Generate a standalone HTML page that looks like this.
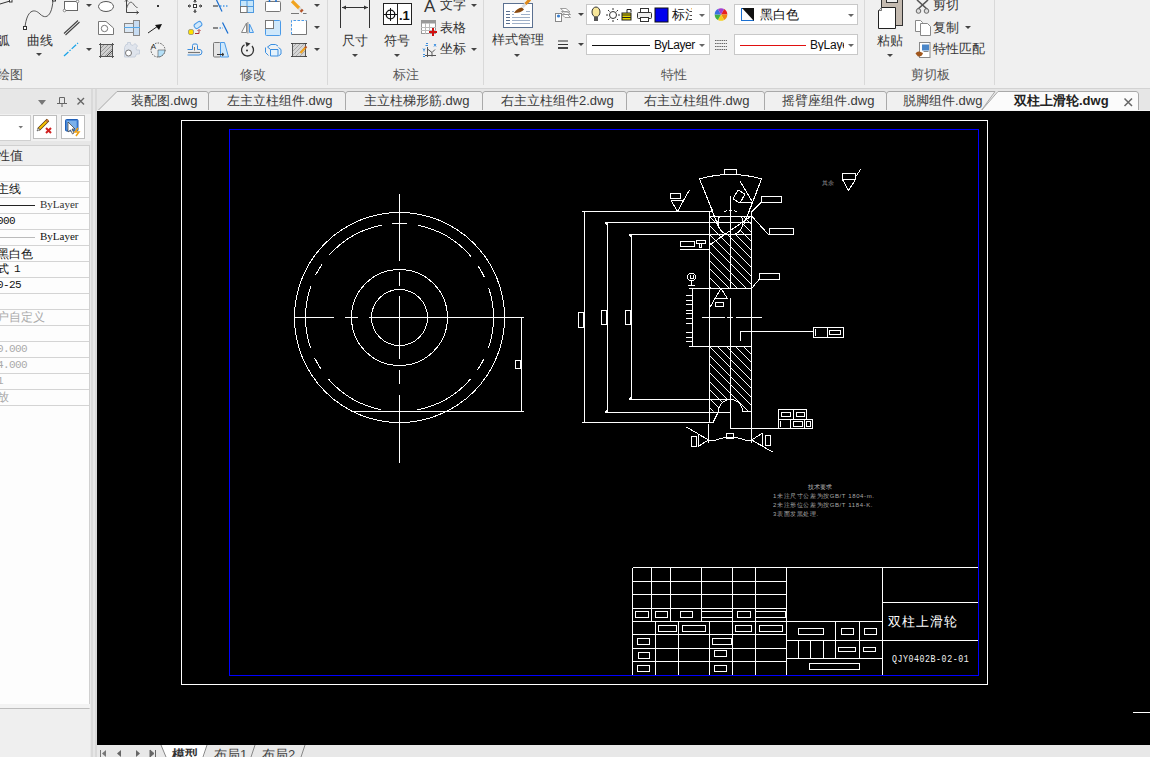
<!DOCTYPE html><html><head><meta charset="utf-8"><style>
*{margin:0;padding:0;box-sizing:border-box}
html,body{width:1150px;height:757px;overflow:hidden;background:#f0f0f0;font-family:"Liberation Sans",sans-serif;color:#333}
.a{position:absolute}
.t{position:absolute;white-space:nowrap;font-size:13px;line-height:14px;color:#444}
.sep{position:absolute;top:0;width:1px;height:85px;background:#d9d9d9}
.dd{position:absolute;width:0;height:0;border-left:3px solid transparent;border-right:3px solid transparent;border-top:3px solid #444}
.pr{position:absolute;left:0;width:89px;height:16px;border-bottom:1px solid #d7d7d7}
.pt{position:absolute;left:0;white-space:nowrap;font-size:12px;line-height:12px;color:#111}
.pg{color:#9a9a9a}
.sh{left:-3px}
.ser{font-family:"Liberation Serif",serif}
.mono{font-family:"Liberation Mono",monospace}
</style></head><body>
<div class="a" style="left:0;top:0;width:1150px;height:88px;background:#f0f0f0"></div>
<div class="a" style="left:0;top:88px;width:1150px;height:1px;background:#d3d3d3"></div>
<div class="sep" style="left:177px"></div>
<div class="sep" style="left:327px"></div>
<div class="sep" style="left:483px"></div>
<div class="sep" style="left:864px"></div>
<div class="sep" style="left:994px"></div>
<div class="t" style="left:-3px;top:68px;font-size:13px;line-height:13px;color:#555;">绘图</div>
<div class="t" style="left:240px;top:68px;font-size:13px;line-height:13px;color:#555;">修改</div>
<div class="t" style="left:393px;top:68px;font-size:13px;line-height:13px;color:#555;">标注</div>
<div class="t" style="left:661px;top:68px;font-size:13px;line-height:13px;color:#555;">特性</div>
<div class="t" style="left:911px;top:68px;font-size:13px;line-height:13px;color:#555;">剪切板</div>
<div class="t" style="left:-3px;top:34px;font-size:13px;line-height:13px;color:#333;">弧</div>
<div class="t" style="left:27px;top:34px;font-size:13px;line-height:13px;color:#333;">曲线</div>
<div class="dd" style="left:36px;top:53px;border-top-color:#444"></div>
<div class="t" style="left:342px;top:34px;font-size:13px;line-height:13px;color:#333;">尺寸</div>
<div class="dd" style="left:352px;top:54px;border-top-color:#444"></div>
<div class="t" style="left:384px;top:34px;font-size:13px;line-height:13px;color:#333;">符号</div>
<div class="dd" style="left:394px;top:54px;border-top-color:#444"></div>
<div class="t" style="left:492px;top:33px;font-size:13px;line-height:13px;color:#333;">样式管理</div>
<div class="dd" style="left:514px;top:54px;border-top-color:#444"></div>
<div class="t" style="left:877px;top:34px;font-size:13px;line-height:13px;color:#333;">粘贴</div>
<div class="dd" style="left:887px;top:54px;border-top-color:#444"></div>
<div class="t" style="left:440px;top:-2px;font-size:13px;line-height:13px;color:#333;">文字</div>
<div class="dd" style="left:471px;top:4px;border-top-color:#444"></div>
<div class="t" style="left:440px;top:21px;font-size:13px;line-height:13px;color:#333;">表格</div>
<div class="t" style="left:440px;top:42px;font-size:13px;line-height:13px;color:#333;">坐标</div>
<div class="dd" style="left:471px;top:48px;border-top-color:#444"></div>
<div class="t" style="left:933px;top:-2px;font-size:13px;line-height:13px;color:#333;">剪切</div>
<div class="t" style="left:933px;top:21px;font-size:13px;line-height:13px;color:#333;">复制</div>
<div class="dd" style="left:965px;top:26px;border-top-color:#444"></div>
<div class="t" style="left:933px;top:42px;font-size:13px;line-height:13px;color:#333;">特性匹配</div>
<div class="dd" style="left:86px;top:4px;border-top-color:#444"></div>
<div class="dd" style="left:86px;top:48px;border-top-color:#444"></div>
<div class="dd" style="left:314px;top:4px;border-top-color:#444"></div>
<div class="dd" style="left:314px;top:26px;border-top-color:#444"></div>
<div class="dd" style="left:314px;top:48px;border-top-color:#444"></div>
<div class="dd" style="left:578px;top:13px;border-top-color:#444"></div>
<div class="dd" style="left:578px;top:43px;border-top-color:#444"></div>
<svg class="a" style="left:0;top:0" width="1150" height="88" viewBox="0 0 1150 88"><path d="M0 4 L10 1" stroke="#333" fill="none"/><rect x="9.5" y="-0.5" width="2.5" height="2.5" fill="#fff" stroke="#333"/><path d="M25 27 C27 10 34 8 40 14 C46 20 52 16 53 0" stroke="#555" fill="none"/><rect x="23.5" y="26.5" width="3" height="3" fill="#fff" stroke="#333"/><rect x="52.5" y="-1" width="3" height="2" fill="#fff" stroke="#333"/><rect x="64.5" y="1.5" width="13" height="9" fill="#fff" stroke="#666"/><circle cx="64.5" cy="10.5" r="1.3" fill="#fff" stroke="#666" stroke-width=".7"/><circle cx="77.5" cy="1.5" r="1.3" fill="#fff" stroke="#666" stroke-width=".7"/><path d="M64 33.5 L78 20.5 M65.5 35 L79.5 22" stroke="#444" stroke-width="1.1" fill="none"/><path d="M64 56 L78 43" stroke="#1aa3e8" stroke-width="1.3" stroke-dasharray="6 1.5 1.5 1.5" fill="none"/><ellipse cx="106" cy="6.5" rx="7.5" ry="5" fill="#fff" stroke="#555"/><path d="M126.5 0 V12.5 H138.5" stroke="#444" fill="none"/><path d="M136.5 11 L138.5 12.5 L136.5 14 M125 1.5 L126.5 0 L128 1.5" stroke="#444" fill="none"/><path d="M126.5 8.5 C128.5 2 131 1 133 3.5 C135 6 136 7.5 137.5 7.5" stroke="#555" fill="none"/><rect x="157" y="5" width="2" height="2" fill="#333"/><path d="M98.5 21.5 H106 L113.5 28 V34.5 H98.5 Z" fill="#fff" stroke="#777"/><circle cx="104.5" cy="28.5" r="3.2" fill="none" stroke="#777"/><rect x="124.5" y="23.5" width="9" height="9" fill="#dbe7f3" stroke="#888"/><rect x="133.5" y="20.5" width="6" height="15" fill="#c7dcf2" stroke="#888"/><path d="M124 27.5 H140" stroke="#57a8e8"/><path d="M148 33 L158 26" stroke="#222"/><path d="M162 24 L155 25 L159 30 Z" fill="#111"/><rect x="100.5" y="44.5" width="12" height="12" fill="#d0d0d0" stroke="#666"/><path d="M101 48 L104 45 M101 52 L108 45 M101 56 L112 45 M105 56 L112 49 M109 56 L112 53" stroke="#999"/><path d="M99 44.5 H114 M100.5 43 V58 M99 56.5 H114 M112.5 43 V58" stroke="#555"/><path d="M106 57 L113 50" stroke="#444"/><path d="M124.5 47.5 L126 44.5 H127.5 V42.5 H130.5 V44.5 L133 45.5 L135 43.5 L137.5 46 L136 48 L136.5 50 H139.5 V54 H136.5 L135 57 H124.5 Z" fill="#dfe4ec" stroke="#c8d0dc"/><circle cx="128.5" cy="53" r="3" fill="#fff" stroke="#777"/><circle cx="158" cy="50" r="7" fill="none" stroke="#555" stroke-dasharray="1.5 1.2"/><path d="M158 50 H165 A7 7 0 0 1 158 57 Z" fill="#b5e0f8" stroke="#555" stroke-width=".6"/><text x="151" y="48.5" font-size="7.5" fill="#333" font-family="Liberation Sans">A</text><rect x="193.5" y="4.5" width="3" height="3" fill="#fff" stroke="#333"/><path d="M195 0 V2.5 M195 9.5 V12.5 M188 6 H191 M199 6 H202" stroke="#444" stroke-width="1.6"/><path d="M193.5 1.5 L195 0 L196.5 1.5 M193.5 11 L195 12.5 L196.5 11 M189.5 4.5 L188 6 L189.5 7.5 M200.5 4.5 L202 6 L200.5 7.5" stroke="#444" fill="none"/><path d="M213 6 H218" stroke="#666" stroke-width="1.5"/><path d="M220 6 H228.5" stroke="#4a9ae8" stroke-width="1.3" stroke-dasharray="1.5 1.5"/><path d="M216.5 0 L222 11.5" stroke="#1a6fd1" stroke-width="1.2"/><rect x="240.5" y="0.5" width="13" height="12" fill="#c6e6fb" stroke="#4f9ae0"/><path d="M247 0 V13 M240 6.5 H254" stroke="#4f9ae0"/><rect x="240.5" y="6.5" width="6.5" height="6" fill="#fff" stroke="#777"/><rect x="265.5" y="1.5" width="15" height="10" rx="1" fill="#fff" stroke="#777"/><path d="M269.5 0 V2 M276 0 V2" stroke="#1a6fd1" stroke-width="1.5"/><path d="M292 1 L299.5 8.5" stroke="#f0a31f" stroke-width="3.2"/><path d="M299 8 L301 10" stroke="#ddd" stroke-width="3.2"/><path d="M300.8 9.8 L302.5 11.5" stroke="#b5542a" stroke-width="3.2"/><path d="M291 13.5 H299 M303 13.5 H306.5" stroke="#777"/><rect x="188.5" y="29.5" width="5" height="5" rx="1.5" fill="#ffe100" stroke="#777" stroke-width=".6"/><rect x="194" y="22.5" width="8" height="5" rx="2.2" transform="rotate(-35 198 25)" fill="#cfe8fb" stroke="#4a9ae8"/><path d="M195 33.5 H199 V30.5" stroke="#b03030" fill="none"/><path d="M197.5 31 L199 29.5 L200.5 31" stroke="#b03030" fill="none"/><path d="M213 28 H218" stroke="#666" stroke-width="1.5"/><path d="M219.5 28 H223" stroke="#4a9ae8" stroke-width="1.3" stroke-dasharray="1.5 1.5"/><path d="M222.5 22.5 L228 33.5" stroke="#1a6fd1" stroke-width="1.2"/><path d="M246.5 23 L241.5 32.5 H246.5 Z" fill="#fff" stroke="#888"/><path d="M247.8 22 V33.5" stroke="#aaa" stroke-width="1.5"/><path d="M249.5 24 L253.5 32.5 H249.5 Z" fill="#cfe8fb" stroke="#4a9ae8"/><rect x="265.5" y="20.5" width="15" height="15" rx="1" fill="#cfe8fb" stroke="#4a9ae8"/><rect x="265.5" y="20.5" width="8" height="8" fill="#fff" stroke="#777"/><path d="M291.5 34.5 H306.5 V20.5" stroke="#777" fill="none"/><path d="M291.5 34.5 V20.5 H306.5" stroke="#4a9ae8" fill="none" stroke-dasharray="2.5 1.5"/><rect x="292" y="21" width="14" height="13" fill="#fff"/><path d="M187.5 49.5 H192.5 V45.5 Q192.5 44 194 44 H196 Q197.5 44 197.5 45.5 V49.5 H200 Q202 50 202 52 Q202 55 199 55 H187.5" stroke="#3a8ee0" fill="none"/><path d="M188 52.5 H200" stroke="#777" stroke-width="1.2"/><path d="M194.5 47 V50.5" stroke="#777"/><rect x="213.5" y="42.5" width="7" height="14.5" rx="1" fill="#e4e4e4" stroke="#777"/><path d="M220.5 42.5 H224.5 L228.5 57 H220.5 Z" fill="#cfe8fb" stroke="#4a9ae8"/><path d="M217 54.5 H223.5 M222 53 L224 54.5 L222 56" stroke="#333" fill="none"/><path d="M252 46 A6 6 0 1 1 244.5 44.8" fill="none" stroke="#333" stroke-width="1.3"/><path d="M245.5 42 L250.5 43.5 L246.5 47 Z" fill="#333"/><circle cx="247" cy="50.5" r="1" fill="#333"/><path d="M267.5 47 L271 44.5 H275.5 L278 46 M265.5 47.5 V52.5 L268.5 55.5 M270.5 49.5 H278 V56 H270.5 Z M278.5 47.5 L281 49.5 V54 L278.5 56 M267.5 47 L270.5 49.5" stroke="#3a8ee0" fill="#e4f2fc"/><rect x="292.5" y="43.5" width="13" height="13" fill="#d6d6d6" stroke="#555"/><path d="M293 47 L296 44 M293 51 L300 44 M293 55 L304 44 M296 56 L305 47 M300 56 L305 51" stroke="#aaa"/><path d="M291 43.5 H293 M304 43.5 H307 M291 56.5 H293 M304 56.5 H307" stroke="#444"/><path d="M300.5 53 L305.5 47.5" stroke="#f0a31f" stroke-width="2.2"/><path d="M305 48 L306.5 46.5" stroke="#b5542a" stroke-width="2.2"/><path d="M340.5 0 V28 M369.5 0 V28 M342 7.5 H368" stroke="#333" fill="none"/><path d="M342 7.5 L346 5.5 V9.5 Z M368 7.5 L364 5.5 V9.5 Z" fill="#333"/><rect x="383.5" y="3.5" width="28" height="21" fill="#fff" stroke="#222"/><path d="M397.5 3.5 V24.5" stroke="#222"/><circle cx="390.5" cy="14.5" r="4.3" fill="none" stroke="#111" stroke-width="1.3"/><path d="M384 14.5 H397 M390.5 8 V21" stroke="#111"/><text x="399" y="20" font-size="13" font-weight="bold" fill="#111" font-family="Liberation Sans">.1</text><text x="424" y="12" font-size="17" fill="#333" font-family="Liberation Sans">A</text><rect x="421.5" y="20.5" width="14" height="13" fill="#fff" stroke="#999"/><rect x="421.5" y="20.5" width="14" height="3" fill="#999"/><path d="M421 27.5 H436 M421 30.5 H436 M425.5 23 V34 M429.5 23 V34" stroke="#bbb"/><path d="M433 28 V36 M429 32 H437" stroke="#d01010" stroke-width="2"/><path d="M427.5 47 V57 M425 55.5 H436 M427.5 49 L432 52.5 L435 49.5 M432 52.5 V56.5" stroke="#555" fill="none"/><path d="M426 43.5 H428 M425.5 45.5 H428 M434 44 L436 46.5 M436 44 L434 46.5 M423 48.5 L424 50 L425 48.5 M424 50 V51.5 M423 54.5 H425 M423 56.5 H425" stroke="#3a8ee0" fill="none"/><rect x="503.5" y="3.5" width="29" height="24" fill="#fff" stroke="#5a7090"/><path d="M506 11.5 H510 M506 14.5 H510 M506 17.5 H510 M506 20.5 H510 M506 23.5 H510" stroke="#5a7090"/><path d="M512 17.5 H530 M512 20.5 H530 M512 23.5 H530 M521 14.5 H530 M526 11.5 H530 M512 11.5 H514 M512 14.5 H514" stroke="#9fb0c8"/><path d="M514 13 Q517 8 522 7.5 L524 9.5 Q521 13 514 13 Z" fill="#8a4a10"/><path d="M522.5 7 L526 3.5" stroke="#ddd" stroke-width="3"/><path d="M525.5 4 L530 -0.5" stroke="#e08a1a" stroke-width="3"/><path d="M560.5 8.5 L566 8.5 L570 12 L564.5 12 Z M561.5 11.5 L567 11.5 L570.5 14.5 L565 14.5 Z M562 14.5 L567.5 14.5 L570.5 17.5 L565 17.5 Z" fill="#fff" stroke="#888" stroke-width=".8"/><rect x="555.5" y="13.5" width="6" height="8" fill="#fff" stroke="#888"/><circle cx="558.5" cy="16" r="1.6" fill="#3a80d0"/><path d="M558 41 H568 M558 44.5 H568" stroke="#333" stroke-width="1.2"/><path d="M558 48 H568" stroke="#333" stroke-width="1.8"/><rect x="586.5" y="4.5" width="123" height="20" fill="#fff" stroke="#c8c8c8"/><rect x="586.5" y="34.5" width="123" height="20" fill="#fff" stroke="#c8c8c8"/><rect x="734.5" y="4.5" width="123" height="20" fill="#fff" stroke="#c8c8c8"/><rect x="734.5" y="34.5" width="123" height="20" fill="#fff" stroke="#c8c8c8"/><ellipse cx="596" cy="12" rx="4" ry="5" fill="#f8e79a" stroke="#333"/><rect x="594" y="17" width="4" height="4" fill="#555"/><circle cx="613" cy="15" r="3.5" fill="none" stroke="#333"/><path d="M606 15 H608 M618 15 H620 M613 8 V10 M613 20 V22 M608 10 L609.5 11.5 M617 19 L618 20 M618 10 L616.5 11.5 M608 20 L609.5 18.5" stroke="#333"/><rect x="622" y="13" width="9" height="7" fill="#e8d800" stroke="#222"/><path d="M622 15 H631 M622 17.5 H631" stroke="#222"/><path d="M627 13 V9.5 H631 V12" stroke="#222" fill="none"/><rect x="637.5" y="12.5" width="14" height="6" rx="1" fill="#eee" stroke="#333"/><rect x="640.5" y="8.5" width="8" height="4" fill="#fff" stroke="#333"/><rect x="640.5" y="17.5" width="8" height="4" fill="#fff" stroke="#333"/><rect x="655" y="8" width="13" height="14" fill="#0000ee" stroke="#111"/><path d="M721 14.5 L724.15 9.04 A6.3 6.3 0 0 1 727.30 14.50 Z" fill="#e82020"/><path d="M721 14.5 L727.30 14.50 A6.3 6.3 0 0 1 724.15 19.96 Z" fill="#f08a10"/><path d="M721 14.5 L724.15 19.96 A6.3 6.3 0 0 1 717.85 19.96 Z" fill="#f4d020"/><path d="M721 14.5 L717.85 19.96 A6.3 6.3 0 0 1 714.70 14.50 Z" fill="#40b040"/><path d="M721 14.5 L714.70 14.50 A6.3 6.3 0 0 1 717.85 9.04 Z" fill="#3a70e0"/><path d="M721 14.5 L717.85 9.04 A6.3 6.3 0 0 1 724.15 9.04 Z" fill="#a040d0"/><path d="M715 40.5 H727 M715 43.5 H727 M715 46.5 H727 M715 49.5 H727" stroke="#666" stroke-dasharray="1.5 .7"/><rect x="741.5" y="8.5" width="12" height="12" fill="#fff" stroke="#1a6fd1"/><path d="M742 8 H754 V21 Z" fill="#111"/><path d="M592 45.5 H650" stroke="#111"/><path d="M740 45.5 H806" stroke="#e01010"/><rect x="881.5" y="-1.5" width="21" height="27" fill="#c4bab0" stroke="#333"/><rect x="886.5" y="-1" width="11" height="3.5" fill="#eee" stroke="#333"/><path d="M881.5 7.5 H895.5 V28.5 H878.5 V10.5 Z" fill="#fff" stroke="#222"/><path d="M878.5 10.5 H881.5 V7.5" fill="#ddd" stroke="#222" stroke-width=".6"/><path d="M917 0 L927.5 9.5 M928 0 L917.5 9.5" stroke="#555" stroke-width="1.6"/><circle cx="918.5" cy="11" r="2.3" fill="#ddd" stroke="#666"/><circle cx="926.5" cy="11" r="2.3" fill="#ddd" stroke="#666"/><path d="M915.5 20.5 H920.5 L922.5 22.5 V31.5 H915.5 Z" fill="#fff" stroke="#888"/><path d="M920.5 23.5 H927.5 L930.5 26.5 V35.5 H920.5 Z" fill="#fff" stroke="#888"/><rect x="919.5" y="42.5" width="10.5" height="15" fill="#fff" stroke="#888"/><rect x="922" y="44.5" width="7" height="6" fill="#4a86c8"/><path d="M923.5 51.5 H928.5" stroke="#888"/><path d="M915.5 53.5 Q917 51 919.5 51.5 L923 53 Q922 57 918 56.5 Z" fill="#a0561c"/></svg>
<div class="t" style="left:672px;top:8px;font-size:13px;color:#111">标注</div>
<div class="a" style="left:692px;top:5px;width:6px;height:19px;background:#fff"></div>
<div class="dd" style="left:699px;top:14px;border-top-color:#666"></div>
<div class="t" style="left:654px;top:39px;font-size:12px;line-height:12px;color:#111;letter-spacing:-0.45px">ByLayer</div>
<div class="dd" style="left:699px;top:44px;border-top-color:#666"></div>
<div class="t" style="left:760px;top:8px;font-size:13px;color:#111">黑白色</div>
<div class="dd" style="left:848px;top:14px;border-top-color:#666"></div>
<div class="t" style="left:810px;top:39px;font-size:12px;line-height:12px;color:#111;width:34px;overflow:hidden;letter-spacing:-0.2px">ByLayer</div>
<div class="dd" style="left:848px;top:44px;border-top-color:#666"></div>
<div class="a" style="left:0;top:89px;width:91px;height:668px;background:#e7e7e7"></div>
<div class="a" style="left:91px;top:89px;width:6px;height:668px;background:#d9d9d9"></div>
<div class="a" style="left:93px;top:89px;width:2px;height:668px;background:#e6e6e6"></div>
<div class="dd" style="left:38px;top:100px;border-left-width:4.5px;border-right-width:4.5px;border-top-width:5px;border-top-color:#777"></div>
<svg class="a" style="left:0;top:89px" width="91" height="60" viewBox="0 89 91 60"><path d="M59.5 97.5 H64.5 V103.5 H59.5 Z M57 103.5 H67 M62 103.5 V107" stroke="#666" fill="none"/><path d="M77.5 98 L84 104.5 M84 98 L77.5 104.5" stroke="#666" stroke-width="1.4"/><rect x="0" y="114" width="91" height="27" fill="#f1f1f1"/><rect x="-1" y="115.5" width="31.5" height="25" fill="#fff" stroke="#d0d0d0"/><path d="M18.5 126 H23 L20.75 128.5 Z" fill="#777"/><rect x="33.5" y="115.5" width="23" height="23" fill="#fff" stroke="#bdbdbd"/><rect x="61.5" y="115.5" width="23" height="23" fill="#fff" stroke="#bdbdbd"/><path d="M38.5 129.5 L48 120" stroke="#5a3a10" stroke-width="3.6"/><path d="M39 129 L46.5 121.5" stroke="#f8c400" stroke-width="2"/><path d="M46.3 121.7 L48.2 119.8" stroke="#c87a3a" stroke-width="2"/><path d="M37 131 L38.5 128 L40 129.5 Z" fill="#fff" stroke="#333" stroke-width=".6"/><path d="M46 128 L51 133 M51 128 L46 133" stroke="#d02020" stroke-width="2"/><rect x="65.5" y="119.5" width="12.5" height="11.5" rx="1" fill="#4a88d8" stroke="#1f5fb8"/><rect x="67" y="121" width="9.5" height="8.5" fill="#7ab0ea"/><path d="M68 122 L68 132 L70.5 130 L72.5 134 L74 133 L72 129 L75 129 Z" fill="#fff" stroke="#333" stroke-width=".7"/><path d="M78 128 L75 132 H79 L76 136" stroke="#f0a010" stroke-width="1.5" fill="none"/></svg>
<div class="a" style="left:0;top:145px;width:90px;height:560px;background:#fdfdfd"></div>
<div class="a" style="left:0;top:145px;width:90px;height:21px;background:#f0f0f0;border-top:1px solid #d0d0d0;border-bottom:1px solid #cfcfcf;border-right:1px solid #d0d0d0"></div>
<div class="t" style="left:-3px;top:149px;font-size:13px;line-height:14px;color:#333">性值</div>
<div class="a" style="left:0;top:181px;width:89px;height:1px;background:#d4d4d4"></div>
<div class="a" style="left:0;top:197px;width:89px;height:1px;background:#d4d4d4"></div>
<div class="a" style="left:0;top:213px;width:89px;height:1px;background:#d4d4d4"></div>
<div class="a" style="left:0;top:229px;width:89px;height:1px;background:#d4d4d4"></div>
<div class="a" style="left:0;top:245px;width:89px;height:1px;background:#d4d4d4"></div>
<div class="a" style="left:0;top:261px;width:89px;height:1px;background:#d4d4d4"></div>
<div class="a" style="left:0;top:277px;width:89px;height:1px;background:#d4d4d4"></div>
<div class="a" style="left:0;top:293px;width:89px;height:1px;background:#d4d4d4"></div>
<div class="a" style="left:0;top:309px;width:89px;height:1px;background:#d4d4d4"></div>
<div class="a" style="left:0;top:325px;width:89px;height:1px;background:#d4d4d4"></div>
<div class="a" style="left:0;top:341px;width:89px;height:1px;background:#d4d4d4"></div>
<div class="a" style="left:0;top:357px;width:89px;height:1px;background:#d4d4d4"></div>
<div class="a" style="left:0;top:373px;width:89px;height:1px;background:#d4d4d4"></div>
<div class="a" style="left:0;top:389px;width:89px;height:1px;background:#d4d4d4"></div>
<div class="a" style="left:0;top:405px;width:89px;height:1px;background:#d4d4d4"></div>
<div class="a" style="left:89px;top:145px;width:1px;height:565px;background:#d0d0d0"></div>
<div class="a" style="left:0;top:704px;width:90px;height:4px;background:#f3f3f3"></div>
<div class="a" style="left:0;top:708px;width:89px;height:1px;background:#bdbdbd"></div>
<div class="a" style="left:0;top:709px;width:90px;height:48px;background:#efefef"></div>
<div class="pt sh" style="top:183px;color:#111;font-size:12px;line-height:12px">主线</div>
<div class="a" style="left:0;top:205px;width:35px;height:1px;background:#222"></div>
<div class="t ser" style="left:40px;top:199px;font-size:11px;line-height:11px;color:#333">ByLayer</div>
<div class="t mono" style="left:-3px;top:216px;font-size:11px;line-height:11px;color:#111;letter-spacing:-0.6px">000</div>
<div class="a" style="left:0;top:237px;width:35px;height:1px;background:#bbb"></div>
<div class="t ser" style="left:40px;top:231px;font-size:11px;line-height:11px;color:#111">ByLayer</div>
<div class="pt sh" style="top:248px;color:#111;font-size:12px;line-height:12px">黑白色</div>
<div class="pt sh" style="top:263px;color:#111;font-size:12px;line-height:12px">式</div>
<div class="t mono" style="left:14px;top:264px;font-size:11px;line-height:11px;color:#111">1</div>
<div class="t mono" style="left:-3px;top:280px;font-size:11px;line-height:11px;color:#111;letter-spacing:-0.6px">0-25</div>
<div class="pt sh" style="top:311px;color:#aaa;font-size:12px;line-height:12px">户自定义</div>
<div class="t mono" style="left:-3px;top:344px;font-size:11px;line-height:11px;color:#aaa;letter-spacing:-0.6px">0.000</div>
<div class="t mono" style="left:-3px;top:360px;font-size:11px;line-height:11px;color:#aaa;letter-spacing:-0.6px">4.000</div>
<div class="t mono" style="left:-3px;top:376px;font-size:11px;line-height:11px;color:#aaa">1</div>
<div class="pt sh" style="top:391px;color:#aaa;font-size:12px;line-height:12px">放</div>
<div class="a" style="left:97px;top:89px;width:1053px;height:22px;background:#e6e6e6"></div>
<svg class="a" style="left:0;top:0" width="1150" height="112" viewBox="0 0 1150 112"><path d="M97.5 111 L117 91.5 H206 Q208 91.5 208.5 94 V111" fill="#f0f0f0" stroke="#a9a9a9"/><path d="M208.5 111 V94 Q209 91.5 211 91.5 H343 Q345 91.5 345.5 94 V111" fill="#f0f0f0" stroke="#a9a9a9"/><path d="M345.5 111 V94 Q346 91.5 348 91.5 H480 Q482 91.5 482.5 94 V111" fill="#f0f0f0" stroke="#a9a9a9"/><path d="M482.5 111 V94 Q483 91.5 485 91.5 H624 Q626 91.5 626.5 94 V111" fill="#f0f0f0" stroke="#a9a9a9"/><path d="M626.5 111 V94 Q627 91.5 629 91.5 H762 Q764 91.5 764.5 94 V111" fill="#f0f0f0" stroke="#a9a9a9"/><path d="M764.5 111 V94 Q765 91.5 767 91.5 H884 Q886 91.5 886.5 94 V111" fill="#f0f0f0" stroke="#a9a9a9"/><path d="M886.5 111 V94 Q887 91.5 889 91.5 H995 L981 111" fill="#f0f0f0" stroke="#a9a9a9"/><path d="M981 111 L998 91.5 H1136 Q1138 91.5 1138.5 94 V111" fill="#fbfbfb" stroke="#a9a9a9"/><path d="M1124.5 98.5 L1132 106 M1132 98.5 L1124.5 106" stroke="#666" stroke-width="1.5"/><rect x="97" y="110" width="1053" height="1" fill="#f4f4f4"/></svg>
<div class="t" style="left:131px;top:94px;font-size:13px;line-height:13px;color:#3a3a3a;">装配图.dwg</div>
<div class="t" style="left:227px;top:94px;font-size:13px;line-height:13px;color:#3a3a3a;">左主立柱组件.dwg</div>
<div class="t" style="left:364px;top:94px;font-size:13px;line-height:13px;color:#3a3a3a;">主立柱梯形筋.dwg</div>
<div class="t" style="left:501px;top:94px;font-size:13px;line-height:13px;color:#3a3a3a;">右主立柱组件2.dwg</div>
<div class="t" style="left:644px;top:94px;font-size:13px;line-height:13px;color:#3a3a3a;">右主立柱组件.dwg</div>
<div class="t" style="left:782px;top:94px;font-size:13px;line-height:13px;color:#3a3a3a;">摇臂座组件.dwg</div>
<div class="t" style="left:903px;top:94px;font-size:13px;line-height:13px;color:#3a3a3a;">脱脚组件.dwg</div>
<div class="t" style="left:1014px;top:94px;font-size:13px;line-height:13px;color:#222;font-weight:bold">双柱上滑轮.dwg</div>
<div class="a" style="left:97px;top:111px;width:1053px;height:634px;background:#000"></div>
<div class="a" style="left:97px;top:745px;width:1053px;height:12px;background:#e8e8e8"></div>
<svg class="a" style="left:0;top:0" width="1150" height="757" viewBox="0 0 1150 757"><g stroke="#fff" stroke-width="1" fill="none" shape-rendering="crispEdges"><rect x="181.5" y="120.5" width="806" height="564" fill="none"/><circle cx="399.5" cy="317.5" r="105" fill="none"/><circle cx="399.5" cy="317.5" r="48" fill="none"/><circle cx="399.5" cy="317.5" r="28" fill="none"/><circle cx="399.5" cy="317.5" r="94" fill="none" stroke-dasharray="62.34 12.30 12.30 11.48" stroke-dashoffset="31.17"/><path d="M399.5 194 L399.5 261"/><path d="M399.5 272 L399.5 286"/><path d="M399.5 296 L399.5 359"/><path d="M399.5 370 L399.5 384"/><path d="M399.5 395 L399.5 463"/><path d="M294 317.5 L334 317.5"/><path d="M345 317.5 L358 317.5"/><path d="M369 317.5 L524 317.5"/><path d="M392 223.5 L406 223.5"/><path d="M351 411.5 L524 411.5"/><path d="M521.5 317.5 L521.5 411.5"/><rect x="515.5" y="360.5" width="5.0" height="8.0" fill="none"/><path d="M582 211.5 L712 211.5"/><path d="M584.5 211.5 L584.5 422.5"/><path d="M582 422.5 L713 422.5"/><path d="M605 222.5 L752 222.5"/><path d="M607.5 222.5 L607.5 412.5"/><path d="M605 412.5 L730 412.5"/><path d="M629 234.5 L752 234.5"/><path d="M631.5 234.5 L631.5 399.5"/><path d="M629 399.5 L730 399.5"/><path d="M605.5 222.5 L607.5 226 L607.5 228"/><path d="M629.5 234.5 L631.5 238"/><path d="M605.5 412.5 L607.5 409"/><path d="M629.5 399.5 L631.5 396"/><rect x="578.5" y="312.5" width="5.0" height="15.0" fill="none"/><rect x="601.5" y="310.5" width="5.0" height="14.0" fill="none"/><rect x="625.5" y="310.5" width="5.0" height="14.0" fill="none"/><path d="M709.5 211.5 L709.5 423"/><path d="M751.5 211.5 L751.5 442.5"/><path d="M709.5 216.5 L751.5 216.5"/><path d="M730.5 196 L730.5 288.5"/><path d="M730.5 297.5 L730.5 428.5"/><path d="M689 288.5 L751.5 288.5"/><path d="M689 346.5 L751.5 346.5"/><path d="M692.5 288.5 L692.5 346.5"/><path d="M686 295.5 L692.5 295.5"/><path d="M686 300.5 L692.5 300.5"/><path d="M686 304.5 L692.5 304.5"/><path d="M686 310.5 L692.5 310.5"/><path d="M686 313.5 L692.5 313.5"/><path d="M686 318.5 L692.5 318.5"/><path d="M686 323.5 L692.5 323.5"/><path d="M686 332.5 L692.5 332.5"/><path d="M686 337.5 L692.5 337.5"/><path d="M686 341.5 L692.5 341.5"/><path d="M719.5 216.5 A12.5 12.5 0 1 0 741.5 216.5" fill="none"/><path d="M718.5 411.5 A12 12 0 0 1 742.5 411.5 L751.5 411.5" fill="none"/><path d="M718.5 411.5 L713 422.5"/><defs><clipPath id="hc"><path d="M709.5 216.5 H751.5 V288.5 H709.5 Z M709.5 346.5 H751.5 V411.5 H709.5 Z"/></clipPath></defs><path clip-path="url(#hc)" d="M700.5 -9.5 L780.5 71.5 M700.5 0.5 L780.5 80.5 M700.5 8.5 L780.5 88.5 M700.5 17.5 L780.5 97.5 M700.5 26.5 L780.5 106.5 M700.5 34.5 L780.5 114.5 M700.5 43.5 L780.5 123.5 M700.5 52.5 L780.5 132.5 M700.5 60.5 L780.5 140.5 M700.5 69.5 L780.5 149.5 M700.5 78.5 L780.5 158.5 M700.5 86.5 L780.5 166.5 M700.5 95.5 L780.5 175.5 M700.5 104.5 L780.5 184.5 M700.5 112.5 L780.5 192.5 M700.5 121.5 L780.5 201.5 M700.5 130.5 L780.5 210.5 M700.5 138.5 L780.5 218.5 M700.5 147.5 L780.5 227.5 M700.5 156.5 L780.5 236.5 M700.5 164.5 L780.5 244.5 M700.5 173.5 L780.5 253.5 M700.5 181.5 L780.5 261.5 M700.5 190.5 L780.5 270.5 M700.5 199.5 L780.5 279.5 M700.5 207.5 L780.5 287.5 M700.5 216.5 L780.5 296.5 M700.5 225.5 L780.5 305.5 M700.5 233.5 L780.5 313.5 M700.5 242.5 L780.5 322.5 M700.5 251.5 L780.5 331.5 M700.5 259.5 L780.5 339.5 M700.5 268.5 L780.5 348.5 M700.5 277.5 L780.5 357.5 M700.5 285.5 L780.5 365.5 M700.5 294.5 L780.5 374.5 M700.5 303.5 L780.5 383.5 M700.5 311.5 L780.5 391.5 M700.5 320.5 L780.5 400.5 M700.5 329.5 L780.5 409.5 M700.5 337.5 L780.5 417.5 M700.5 346.5 L780.5 426.5 M700.5 354.5 L780.5 434.5 M700.5 363.5 L780.5 443.5 M700.5 372.5 L780.5 452.5 M700.5 380.5 L780.5 460.5 M700.5 389.5 L780.5 469.5 M700.5 398.5 L780.5 478.5 M700.5 406.5 L780.5 486.5 M700.5 415.5 L780.5 495.5 M700.5 424.5 L780.5 504.5 M700.5 432.5 L780.5 512.5 M700.5 441.5 L780.5 521.5 M700.5 450.5 L780.5 530.5 M700.5 458.5 L780.5 538.5 M700.5 467.5 L780.5 547.5 M700.5 476.5 L780.5 556.5 M700.5 484.5 L780.5 564.5 M700.5 493.5 L780.5 573.5 M700.5 502.5 L780.5 582.5"/><path d="M719.5 216.5 A12.5 12.5 0 1 0 741.5 216.5 Z" fill="#000" stroke="none"/><path d="M718.5 411.5 A12 12 0 0 1 742.5 411.5 Z" fill="#000" stroke="none"/><path d="M719.5 216.5 A12.5 12.5 0 1 0 741.5 216.5" fill="none"/><path d="M718.5 411.5 A12 12 0 0 1 742.5 411.5" fill="none"/><path d="M730.5 216.5 L730.5 288.5"/><path d="M730.5 346.5 L730.5 428.5"/><path d="M709.5 222.5 L752 222.5"/><path d="M709.5 234.5 L752 234.5"/><path d="M750 217 L709.5 245"/><path d="M699.5 179 L719 228"/><path d="M761.5 179 L744 224"/><path d="M699.5 179 A109 109 0 0 1 761.5 179" fill="none"/><rect x="724.5" y="169.5" width="12.0" height="5.0" fill="none"/><path d="M699.5 179 L713 212"/><path d="M761.5 179 L749 212"/><path d="M740 181 L752.5 202"/><path d="M740 202 L752.5 202"/><path d="M733 199 L738 190 L745 194 L740 203 Z" fill="none"/><path d="M724 212 Q730.5 208 737 212" fill="none" stroke-dasharray="3 2"/><path d="M751.5 212 L761.5 202"/><rect x="761.5" y="196.5" width="20.0" height="5.5" fill="none"/><path d="M752 216.5 L768 234"/><path d="M768 234 L794 234"/><rect x="769.5" y="228.5" width="24.0" height="5.5" fill="none"/><path d="M751.5 288.5 L759.5 279"/><rect x="759.5" y="273.5" width="20.0" height="5.5" fill="none"/><path d="M740.5 341 L740.5 331.5 L812.5 331.5"/><rect x="813.5" y="327.5" width="30.0" height="10.0" fill="none"/><path d="M827.5 327.5 L827.5 337.5"/><rect x="829.5" y="330.5" width="11.0" height="4.0" fill="none"/><path d="M815.5 329 L815.5 336"/><path d="M680 249.5 L709 249.5"/><rect x="680.5" y="241.5" width="14.0" height="5.0" fill="none"/><rect x="696.5" y="240.5" width="9.0" height="3.0" fill="none"/><rect x="699.5" y="243.5" width="2.0" height="3.5" fill="none"/><rect x="670.5" y="193.5" width="10.0" height="5.0" fill="none"/><path d="M671 200.5 L683.5 200.5"/><path d="M671 200.5 L677.5 211.5 L683.5 200.5 L689.5 190"/><rect x="842.5" y="173.5" width="13.0" height="6.0" fill="none"/><path d="M842.5 179.5 L848.5 190.5 L855.5 179.5"/><path d="M855.5 177 L860.5 169.5"/><circle cx="691.5" cy="277" r="4" fill="none"/><path d="M690 274.5 V278 H693 V274.5" fill="none"/><path d="M691.5 281 L691.5 285"/><path d="M688 285.5 L695 285.5"/><path d="M721 288.5 L715 298.5 L727.5 298.5 L721 288.5"/><path d="M715 298.5 L709.5 308"/><rect x="715.5" y="302.5" width="8.0" height="4.0" fill="none"/><path d="M702 317.5 L724.5 317.5"/><path d="M727 317.5 L733 317.5"/><path d="M736 317.5 L761.5 317.5"/><path d="M708.5 424 L708.5 442.5"/><path d="M686.5 427 L708.5 440"/><path d="M708.5 440 L698 434 V446.5 Z" fill="none"/><rect x="691.5" y="436.5" width="5.0" height="10.0" fill="none"/><path d="M708.5 440.5 H714 Q730.5 434 747 440.5 H751.5" fill="none"/><rect x="726.5" y="433.5" width="7.0" height="5.0" fill="none"/><path d="M751.5 440 L762 433.5 V445.5 Z" fill="none"/><path d="M751.5 440 L772.5 452"/><rect x="765.5" y="435.5" width="5.0" height="10.0" fill="none"/><path d="M730.5 428.5 L778 428.5"/><rect x="778.5" y="409.5" width="28.0" height="9.5" fill="none"/><rect x="778.5" y="419" width="34.0" height="9.5" fill="none"/><path d="M793.5 409.5 L793.5 419"/><path d="M790.5 419 L790.5 428.5"/><path d="M804.5 419 L804.5 428.5"/><rect x="781.5" y="412.5" width="9.0" height="4.0" fill="none"/><rect x="796.5" y="412.5" width="8.0" height="4.0" fill="none"/><path d="M780.5 421 L780.5 426.5"/><rect x="793.5" y="421.5" width="9.0" height="4.5" fill="none"/><rect x="806.5" y="421.5" width="4.0" height="4.5" fill="none"/><path d="M632.5 567.5 L786.5 567.5"/><path d="M632.5 581.5 L786.5 581.5"/><path d="M632.5 594.5 L786.5 594.5"/><path d="M632.5 608.5 L786.5 608.5"/><path d="M632.5 621.5 L786.5 621.5"/><path d="M632.5 634.5 L786.5 634.5"/><path d="M632.5 648.5 L786.5 648.5"/><path d="M632.5 661.5 L786.5 661.5"/><path d="M786.5 567.5 L978 567.5"/><path d="M632.5 567.5 L632.5 621.5"/><path d="M651.5 567.5 L651.5 621.5"/><path d="M670.5 567.5 L670.5 621.5"/><path d="M701.5 567.5 L701.5 621.5"/><path d="M732.5 567.5 L732.5 621.5"/><path d="M755.5 567.5 L755.5 621.5"/><path d="M786.5 567.5 L786.5 621.5"/><path d="M632.5 621.5 L632.5 675.5"/><path d="M655.5 621.5 L655.5 675.5"/><path d="M678.5 621.5 L678.5 675.5"/><path d="M709.5 621.5 L709.5 675.5"/><path d="M732.5 621.5 L732.5 675.5"/><path d="M755.5 621.5 L755.5 675.5"/><path d="M786.5 621.5 L786.5 675.5"/><rect x="635.5" y="611.5" width="13.0" height="6.0" fill="none"/><rect x="655.5" y="611.5" width="12.0" height="6.0" fill="none"/><rect x="680.5" y="611.5" width="12.0" height="6.0" fill="none"/><rect x="737.5" y="611.5" width="13.0" height="6.0" fill="none"/><path d="M701.5 611.5 L732.5 611.5"/><path d="M701.5 617.5 L732.5 617.5"/><rect x="755.5" y="611.5" width="30.0" height="6.0" fill="none"/><rect x="658.5" y="625.5" width="18.0" height="6.0" fill="none"/><rect x="682.5" y="625.5" width="23.0" height="6.0" fill="none"/><rect x="735.5" y="625.5" width="16.0" height="6.0" fill="none"/><rect x="759.5" y="625.5" width="23.0" height="6.0" fill="none"/><rect x="637.5" y="638.5" width="12.0" height="6.0" fill="none"/><rect x="712.5" y="638.5" width="19.0" height="6.0" fill="none"/><rect x="638.5" y="652.5" width="11.0" height="6.0" fill="none"/><rect x="714.5" y="650.5" width="12.0" height="6.0" fill="none"/><rect x="637.5" y="665.5" width="12.0" height="6.0" fill="none"/><rect x="714.5" y="665.5" width="12.0" height="6.0" fill="none"/><path d="M786.5 621.5 L882.5 621.5"/><path d="M786.5 640.5 L882.5 640.5"/><path d="M786.5 658.5 L882.5 658.5"/><path d="M882.5 567.5 L882.5 675.5"/><path d="M835.5 621.5 L835.5 658.5"/><path d="M859.5 621.5 L859.5 658.5"/><path d="M798.5 640.5 L798.5 658.5"/><path d="M810.5 640.5 L810.5 658.5"/><path d="M823.5 640.5 L823.5 658.5"/><rect x="798.5" y="628.5" width="25.0" height="6.0" fill="none"/><rect x="841.5" y="628.5" width="12.0" height="6.0" fill="none"/><rect x="864.5" y="628.5" width="12.0" height="6.0" fill="none"/><rect x="838.5" y="647.5" width="17.0" height="4.0" fill="none"/><rect x="863.5" y="647.5" width="12.0" height="4.0" fill="none"/><rect x="809.5" y="663.5" width="50.0" height="6.0" fill="none"/><path d="M882.5 602.5 L978 602.5"/><path d="M882.5 640.5 L978 640.5"/><path d="M1133 712.5 L1150 712.5"/><rect x="229.5" y="129.5" width="749" height="546" fill="none" stroke="#0000ff"/></g></svg>
<div class="t" style="left:888px;top:615px;font-size:13px;line-height:14px;color:#fff;letter-spacing:1px">双柱上滑轮</div>
<div class="t mono" style="left:892px;top:654px;font-size:11px;line-height:11px;color:#f4f4f4;letter-spacing:0.75px;transform:scaleX(0.75);transform-origin:0 0">QJY0402B-02-01</div>
<div class="t" style="left:808px;top:484px;font-size:6px;line-height:6px;color:#bbb">技术要求</div>
<div class="t" style="left:773px;top:493px;font-size:6px;line-height:6px;color:#aaa;letter-spacing:.6px">1未注尺寸公差为按GB/T 1804-m.</div>
<div class="t" style="left:773px;top:502px;font-size:6px;line-height:6px;color:#aaa;letter-spacing:.6px">2未注形位公差为按GB/T 1184-K.</div>
<div class="t" style="left:773px;top:511px;font-size:6px;line-height:6px;color:#aaa;letter-spacing:.6px">3表面发黑处理.</div>
<div class="t" style="left:822px;top:180px;font-size:6px;line-height:6px;color:#999">其余</div>
<svg class="a" style="left:0;top:745px" width="1150" height="12" viewBox="0 745 1150 12"><path d="M100.5 750 V757" stroke="#777" fill="none"/><path d="M106 750 L102 753.5 L106 757 Z" fill="#777"/><path d="M121 750 L117 753.5 L121 757 Z" fill="#666"/><path d="M136 750 L140 753.5 L136 757 Z" fill="#666"/><path d="M150 750 L154 753.5 L150 757 Z M155.5 750 V757" fill="#666" stroke="#666"/><path d="M161 745 L166 757 H204 L207 745 Z" fill="#fff"/><path d="M161 745 L166 757 M207 745 L203 757 M255 745 L251 757 M305 745 L301 757" stroke="#888" fill="none"/></svg>
<div class="t" style="left:172px;top:748px;font-size:13px;line-height:13px;color:#333;font-weight:bold">模型</div>
<div class="t" style="left:214px;top:748px;font-size:13px;line-height:13px;color:#444;">布局1</div>
<div class="t" style="left:262px;top:748px;font-size:13px;line-height:13px;color:#444;">布局2</div>
</body></html>
